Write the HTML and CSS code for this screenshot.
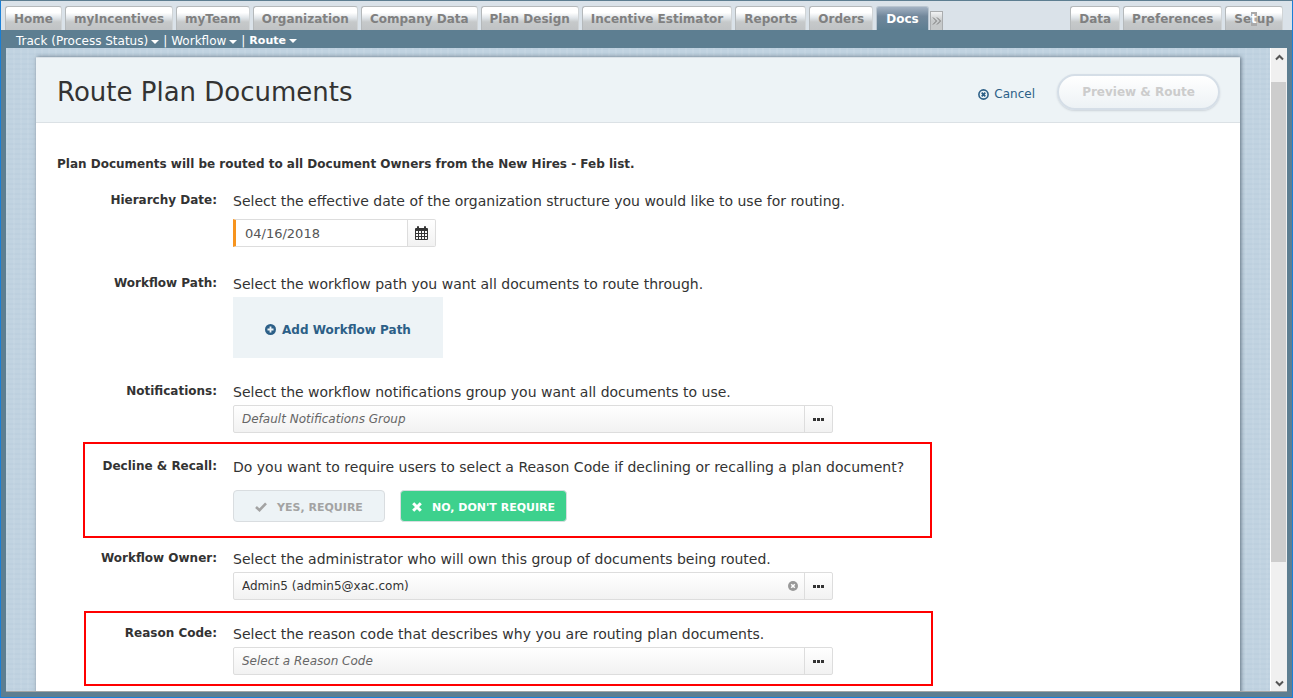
FILE: index.html
```
<!DOCTYPE html>
<html lang="en">

<head>
	<meta charset="utf-8">
	<meta name="viewport" content="width=device-width, initial-scale=1.0">
	<title>Route Plan Documents</title>
	<link rel="stylesheet" href="styles.css">
</head>

<body>
	<header class="topbar">
		<nav class="tabs">
			<a href="#" class="tab">Home</a>
			<a href="#" class="tab">myIncentives</a>
			<a href="#" class="tab">myTeam</a>
			<a href="#" class="tab">Organization</a>
			<a href="#" class="tab">Company Data</a>
			<a href="#" class="tab">Plan Design</a>
			<a href="#" class="tab">Incentive Estimator</a>
			<a href="#" class="tab">Reports</a>
			<a href="#" class="tab">Orders</a>
			<a href="#" class="tab selected">Docs</a>
			<button class="more" aria-label="More tabs">
				<svg width="9" height="8" viewBox="0 0 9 8"><path d="M1 0.5L4.5 4L1 7.5M5 0.5L8.5 4L5 7.5" /></svg>
			</button>
		</nav>
		<nav class="tabs">
			<a href="#" class="tab">Data</a>
			<a href="#" class="tab">Preferences</a>
			<a href="#" class="tab">Se<span class="marked">t</span>up</a>
		</nav>
	</header>

	<nav class="subnav">
		<a href="#">Track (Process Status)<i class="caret"></i></a>
		<span>|</span>
		<a href="#">Workflow<i class="caret"></i></a>
		<span>|</span>
		<a href="#" class="current">Route<i class="caret"></i></a>
	</nav>

	<div class="frame">
		<main>
			<section class="sheet">
				<div class="sheet_header">
					<h1>Route Plan Documents</h1>
					<a href="#" class="cancel">
						<svg width="11" height="11" viewBox="0 0 11 11"><circle cx="5.5" cy="5.5" r="4.6" fill="none" stroke="#2c5f87" stroke-width="1.6" /><path d="M3.7 3.7L7.3 7.3M7.3 3.7L3.7 7.3" stroke="#2c5f87" stroke-width="1.8" /></svg>
						Cancel
					</a>
					<button class="preview" disabled>Preview &amp; Route</button>
				</div>

				<form class="sheet_body">
					<p class="intro">Plan Documents will be routed to all Document Owners from the New Hires - Feb list.</p>

					<div class="row loose">
						<label for="date">Hierarchy Date:</label>
						<div class="field">
							<p>Select the effective date of the organization structure you would like to use for routing.</p>
							<div class="picker date">
								<input type="text" id="date" value="04/16/2018">
								<button type="button" aria-label="Open calendar">
									<svg width="13" height="14" viewBox="0 0 13 14"><path fill="#333" fill-rule="evenodd" d="M0 3Q0 2 1 2H2V1Q2 0 3 0T4 1V2H9V1Q9 0 10 0T11 1V2H12Q13 2 13 3V13Q13 14 12 14H1Q0 14 0 13ZM1 5V7H3V5ZM4 5V7H6V5ZM7 5V7H9V5ZM10 5V7H12V5ZM1 8V10H3V8ZM4 8V10H6V8ZM7 8V10H9V8ZM10 8V10H12V8ZM1 11V13H3V11ZM4 11V13H6V11ZM7 11V13H9V11ZM10 11V13H12V11Z" /></svg>
								</button>
							</div>
						</div>
					</div>

					<div class="row">
						<label for="path">Workflow Path:</label>
						<div class="field">
							<p>Select the workflow path you want all documents to route through.</p>
							<button type="button" id="path" class="add_path">
								<svg width="11" height="11" viewBox="0 0 11 11"><circle cx="5.5" cy="5.5" r="5.5" fill="#2c5f87" /><path d="M5.500 2.500V8.500M2.500 5.500H8.500" stroke="#edf3f6" stroke-width="1.8" /></svg>
								Add Workflow Path
							</button>
						</div>
					</div>

					<div class="row">
						<label for="notifications">Notifications:</label>
						<div class="field">
							<p>Select the workflow notifications group you want all documents to use.</p>
							<div class="picker">
								<input type="text" id="notifications" placeholder="Default Notifications Group">
								<button type="button" aria-label="Browse groups"><i class="dots"></i></button>
							</div>
						</div>
					</div>

					<div class="row loose choice marked_row">
						<span class="label" id="decline">Decline &amp; Recall:</span>
						<div class="field">
							<p>Do you want to require users to select a Reason Code if declining or recalling a plan document?</p>
							<div class="toggle" role="group" aria-labelledby="decline">
								<button type="button" class="yes">
									<svg width="12" height="10" viewBox="0 0 12 10"><path d="M1 5L4.500 8.200L11 1.300" fill="none" stroke="#a3a3a3" stroke-width="2.600" /></svg>
									YES, REQUIRE
								</button>
								<button type="button" class="no">
									<svg width="10" height="10" viewBox="0 0 10 10"><path d="M1.200 1.200L8.800 8.800M8.800 1.200L1.200 8.800" stroke="#fff" stroke-width="3" /></svg>
									NO, DON'T REQUIRE
								</button>
							</div>
						</div>
					</div>

					<div class="row">
						<label for="owner">Workflow Owner:</label>
						<div class="field">
							<p>Select the administrator who will own this group of documents being routed.</p>
							<div class="picker">
								<input type="text" id="owner" value="Admin5 (admin5@xac.com)">
								<button type="button" class="clear" aria-label="Clear owner">
									<svg width="10" height="10" viewBox="0 0 10 10"><circle cx="5" cy="5" r="5" fill="#999" /><path d="M3.200 3.200L6.800 6.800M6.800 3.200L3.200 6.800" stroke="#fff" stroke-width="1.500" /></svg>
								</button>
								<button type="button" aria-label="Browse administrators"><i class="dots"></i></button>
							</div>
						</div>
					</div>

					<div class="row marked_row">
						<label for="reason">Reason Code:</label>
						<div class="field">
							<p>Select the reason code that describes why you are routing plan documents.</p>
							<div class="picker">
								<input type="text" id="reason" placeholder="Select a Reason Code">
								<button type="button" aria-label="Browse reason codes"><i class="dots"></i></button>
							</div>
						</div>
					</div>
				</form>
			</section>
		</main>

		<div class="scrollbar">
			<button aria-label="Scroll up"><svg width="9" height="7" viewBox="0 0 9 7"><path d="M1 5.500L4.500 2L8 5.500" /></svg></button>
			<div class="track"><div class="thumb"></div></div>
			<button aria-label="Scroll down"><svg width="9" height="7" viewBox="0 0 9 7"><path d="M1 1.500L4.500 5L8 1.500" /></svg></button>
		</div>
	</div>
</body>

</html>
```
FILE: styles.css
```
*,
*::before {
	box-sizing: border-box;
	margin: 0;
}

body {
	display: flex;
	flex-direction: column;
	height: 100vh;
	overflow: hidden;
	background-color: #5d7e91;
	border: 1px solid #1a7fd6;
	border-top-color: #5d7e91;
	font-family: Verdana, "DejaVu Sans", sans-serif;
	font-size: 12px;
	color: #333;
}

a {
	color: inherit;
	text-decoration: none;
}

button,
input {
	font: inherit;
	color: inherit;
	padding: 0;
	border: 0;
	background: none;
}

svg {
	flex: none;
}

/* tabs */
.topbar {
	display: flex;
	justify-content: space-between;
	height: 29px;
	padding: 5px 9px 0 4px;
	background-color: #dae2e9;
}

.tabs {
	display: flex;
	align-items: flex-end;
	gap: 3px;
}

.tab {
	height: 24px;
	padding: 0 8px;
	border: 1px solid #b5b9bb;
	border-right-color: #d0d4d6;
	border-bottom: 0;
	border-radius: 3px 3px 0 0;
	background: linear-gradient(#fff 25%, #dfe4e8 48%, #c6c9ca 65%, #c0c3c5);
	font-weight: bold;
	line-height: 25px;
	color: #808080;
	white-space: nowrap;
}

.tab.selected {
	padding: 0 9px;
	border-color: #b9c5d0;
	border-bottom: 0;
	background: linear-gradient(#a3b2c3, #71879b 40%, #5d7e91);
	color: #fff;
}

.marked {
	background-color: #aaa;
	color: #fff;
}

.more {
	display: flex;
	align-items: center;
	justify-content: center;
	width: 13px;
	height: 19px;
	margin-left: -2px;
	border: 1px solid #aaadaf;
	border-bottom: 0;
	background: linear-gradient(#f2f3f4, #c6c9ca 50%);
}

.more svg {
	fill: none;
	stroke: #777;
}

/* second level menu */
.subnav {
	display: flex;
	gap: 4px;
	height: 18px;
	padding-left: 15px;
	line-height: 22px;
	color: #fff;
}

.current {
	font-size: 11px;
	font-weight: bold;
}

.caret {
	display: inline-block;
	margin-left: 3px;
	border: 4px solid transparent;
	border-top-color: #fff;
	border-bottom: 0;
	vertical-align: 1px;
}

.frame {
	flex: 1;
	display: flex;
	min-height: 0;
	margin: 0 5px 5px;
	border-bottom: 1px solid #a3a5a5;
}

main {
	flex: 1;
	min-width: 0;
	overflow: hidden;
	padding: 9px 30px 0;
	background-color: #c1d3e1;
	background-image:
		repeating-linear-gradient(90deg, rgba(255, 255, 255, 0.06) 0 2px, transparent 2px 7px),
		repeating-linear-gradient(rgba(120, 150, 180, 0.05) 0 2px, transparent 2px 5px);
}

.sheet {
	min-height: 100%;
	background-color: #fff;
	box-shadow: 1px 0 4px #5f6f7d;
}

.sheet_header {
	display: flex;
	align-items: center;
	height: 66px;
	padding: 4px 20px 0 21px;
	border-top: 1px solid #dae1e7;
	border-bottom: 1px solid #dbe1e5;
	background-color: #edf3f6;
}

h1 {
	flex: 1;
	font-size: 26px;
	font-weight: normal;
	line-height: 32px;
}

.cancel {
	display: flex;
	align-items: center;
	gap: 5px;
	margin-right: 22px;
	padding-top: 4px;
	color: #2c5f87;
}

.preview {
	width: 163px;
	height: 36px;
	border: 2px solid #d5dee7;
	border-radius: 18px;
	background: linear-gradient(#fff, #edf2f5);
	box-shadow: 0 1px 2px #ccd3d9;
	font-weight: bold;
	color: #ccc;
}

/* form */
.sheet_body {
	padding: 31px 21px 16px;
}

.intro {
	margin-bottom: 17px;
	font-weight: bold;
	line-height: 20px;
}

.row {
	display: flex;
	gap: 16px;
	position: relative;
	margin-bottom: 24px;
}

.row.loose {
	margin-bottom: 27px;
}

.row label,
.label {
	width: 160px;
	font-weight: bold;
	line-height: 18px;
	text-align: right;
}

.field {
	flex: 1;
}

.field p {
	margin-bottom: 3px;
	font-size: 14px;
	line-height: 20px;
}

.date {
	margin-top: 8px;
}

.picker {
	display: flex;
	width: 600px;
	height: 28px;
	border: 1px solid #ddd;
	border-radius: 2px;
	background: linear-gradient(#fff, #f2f2f2);
}

.picker input {
	flex: 1;
	min-width: 0;
	padding-left: 8px;
}

.picker input::placeholder {
	font-style: italic;
	color: #666;
	opacity: 1;
}

.picker button {
	display: flex;
	align-items: center;
	justify-content: center;
	width: 28px;
	border-left: 1px solid #ddd;
}

.picker .clear {
	width: 22px;
	border-left: 0;
}

.picker.date {
	width: 203px;
	border-left: 3px solid #f7941e;
	border-radius: 0 2px 2px 0;
}

.date input {
	background-color: #fff;
	padding-left: 9px;
	font-size: 13px;
	color: #555;
}

.dots {
	width: 11px;
	height: 3px;
	background: repeating-linear-gradient(90deg, #333 0 3px, transparent 3px 4px);
}

.add_path {
	display: flex;
	align-items: center;
	justify-content: center;
	gap: 6px;
	width: 210px;
	height: 61px;
	padding-top: 4px;
	background-color: #edf3f6;
	font-weight: bold;
	color: #2c5f87;
}

.choice .toggle {
	display: flex;
	gap: 15px;
	margin-top: 13px;
}

.toggle button {
	display: flex;
	align-items: center;
	justify-content: center;
	gap: 10px;
	height: 32px;
	padding-top: 2px;
	border: 1px solid #d9dde0;
	border-radius: 4px;
	font-size: 11px;
	font-weight: bold;
}

.toggle .yes {
	width: 152px;
	background-color: #edf3f6;
	color: #a3a3a3;
}

.toggle .no {
	width: 167px;
	background-color: #3dd18d;
	color: #fff;
}

/* red frame round the rows to look at */
.marked_row::before {
	content: "";
	position: absolute;
	inset: -15px auto -16px 26px;
	width: 849px;
	border: 2px solid #f00;
	pointer-events: none;
}

.marked_row:last-child::before {
	inset: -13px auto -11px 27px;
}

/* scrollbar */
.scrollbar {
	display: flex;
	flex-direction: column;
	width: 17px;
	border-left: 1px solid #fff;
	background-color: #f0f0f0;
}

.scrollbar button {
	height: 17px;
}

.scrollbar svg {
	fill: none;
	stroke: #555;
	stroke-width: 2;
}

.track {
	flex: 1;
	padding: 17px 1px 0 0;
}

.thumb {
	height: 81%;
	background-color: #cdcdcd;
}
```
